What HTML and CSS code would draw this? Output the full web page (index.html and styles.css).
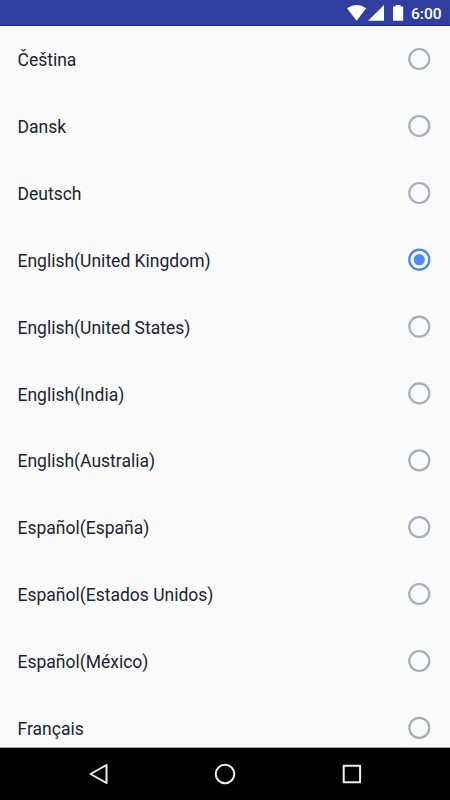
FILE: index.html
```html
<!DOCTYPE html>
<html lang="en">
<head>
<meta charset="utf-8">
<title>Language</title>
<link rel="stylesheet" href="styles.css">
</head>
<body>
<div class="screen">
  <header class="status">
    <svg class="status-icons" width="60" height="26" viewBox="0 0 60 26">
      <path d="M0 8.200Q9.600 1.800 19.200 8.200L9.600 20.800Z"/>
      <path d="M21.200 20.800L37 5V20.800Z"/>
      <path d="M46 6.500h2.600V5h5V6.500h2.600v14.300H46Z"/>
    </svg>
    <span class="time">6:00</span>
  </header>
  <main class="list">
    <div class="row"><span class="name">Čeština</span><svg class="radio" viewBox="0 0 24 24"><circle cx="12.3" cy="12" r="10"/></svg></div>
    <div class="row"><span class="name">Dansk</span><svg class="radio" viewBox="0 0 24 24"><circle cx="12.3" cy="12" r="10"/></svg></div>
    <div class="row"><span class="name">Deutsch</span><svg class="radio" viewBox="0 0 24 24"><circle cx="12.3" cy="12" r="10"/></svg></div>
    <div class="row"><span class="name">English(United Kingdom)</span><svg class="radio selected" viewBox="0 0 24 24"><circle cx="12.3" cy="11.7" r="10"/><circle class="dot" cx="12.3" cy="11.7" r="5.6"/></svg></div>
    <div class="row"><span class="name">English(United States)</span><svg class="radio" viewBox="0 0 24 24"><circle cx="12.3" cy="11.6" r="10"/></svg></div>
    <div class="row"><span class="name">English(India)</span><svg class="radio" viewBox="0 0 24 24"><circle cx="12.3" cy="12.4" r="10"/></svg></div>
    <div class="row"><span class="name">English(Australia)</span><svg class="radio" viewBox="0 0 24 24"><circle cx="12.3" cy="12.3" r="10"/></svg></div>
    <div class="row"><span class="name">Español(España)</span><svg class="radio" viewBox="0 0 24 24"><circle cx="12.3" cy="12.2" r="10"/></svg></div>
    <div class="row"><span class="name">Español(Estados Unidos)</span><svg class="radio" viewBox="0 0 24 24"><circle cx="12.3" cy="12" r="10"/></svg></div>
    <div class="row"><span class="name">Español(México)</span><svg class="radio" viewBox="0 0 24 24"><circle cx="12.3" cy="12" r="10"/></svg></div>
    <div class="row"><span class="name">Français</span><svg class="radio" viewBox="0 0 24 24"><circle cx="12.3" cy="11.8" r="10"/></svg></div>
  </main>
  <nav class="nav">
    <svg width="24" height="24" viewBox="0 0 24 24"><path d="M4.500 12L20.500 3V21Z"/></svg>
    <svg width="24" height="24" viewBox="0 0 24 24"><circle cx="12" cy="12" r="9.300"/></svg>
    <svg width="24" height="24" viewBox="0 0 24 24"><rect x="3.700" y="3.800" width="16.400" height="16.400"/></svg>
  </nav>
</div>
</body>
</html>
```
FILE: styles.css
```css
* { box-sizing: border-box; }
body { margin: 0; font-family: Roboto, sans-serif; }
.screen {
  width: 450px;
  height: 800px;
  display: flex;
  flex-direction: column;
  overflow: hidden;
  background: #fafafa;
}
.status {
  flex: none;
  height: 26px;
  display: flex;
  justify-content: space-between;
  padding: 0 8.5px 0 347px;
  background: #303f9f;
  border-bottom: 1px solid #18258c;
}
.status-icons { flex: none; fill: #fff; }
.time {
  color: #fff;
  font-size: 15.5px;
  font-weight: 500;
  line-height: 26px;
  padding-top: 1px;
}
.list {
  flex: 1;
  min-height: 0;
  overflow: hidden;
  border-bottom: 1px solid #aaa;
}
.row {
  height: 66.87px;
  display: flex;
  align-items: center;
  justify-content: space-between;
  padding: 0 18.6px 0 17.5px;
  color: #1c2433;
  font-size: 17.5px;
  line-height: 24px;
}
.name { padding-top: 1.6px; }
.radio {
  width: 24px;
  height: 24px;
  margin-top: -0.6px;
  fill: none;
  stroke: #a4adba;
  stroke-width: 2.2;
}
.selected { stroke: #4285f4; }
.dot { fill: #4d8af5; stroke: none; }
.nav {
  flex: none;
  height: 52px;
  display: flex;
  align-items: center;
  justify-content: space-between;
  padding: 0 86px;
  background: #000;
}
.nav svg { fill: none; stroke: #eee; stroke-width: 2; stroke-linejoin: round; }
```
